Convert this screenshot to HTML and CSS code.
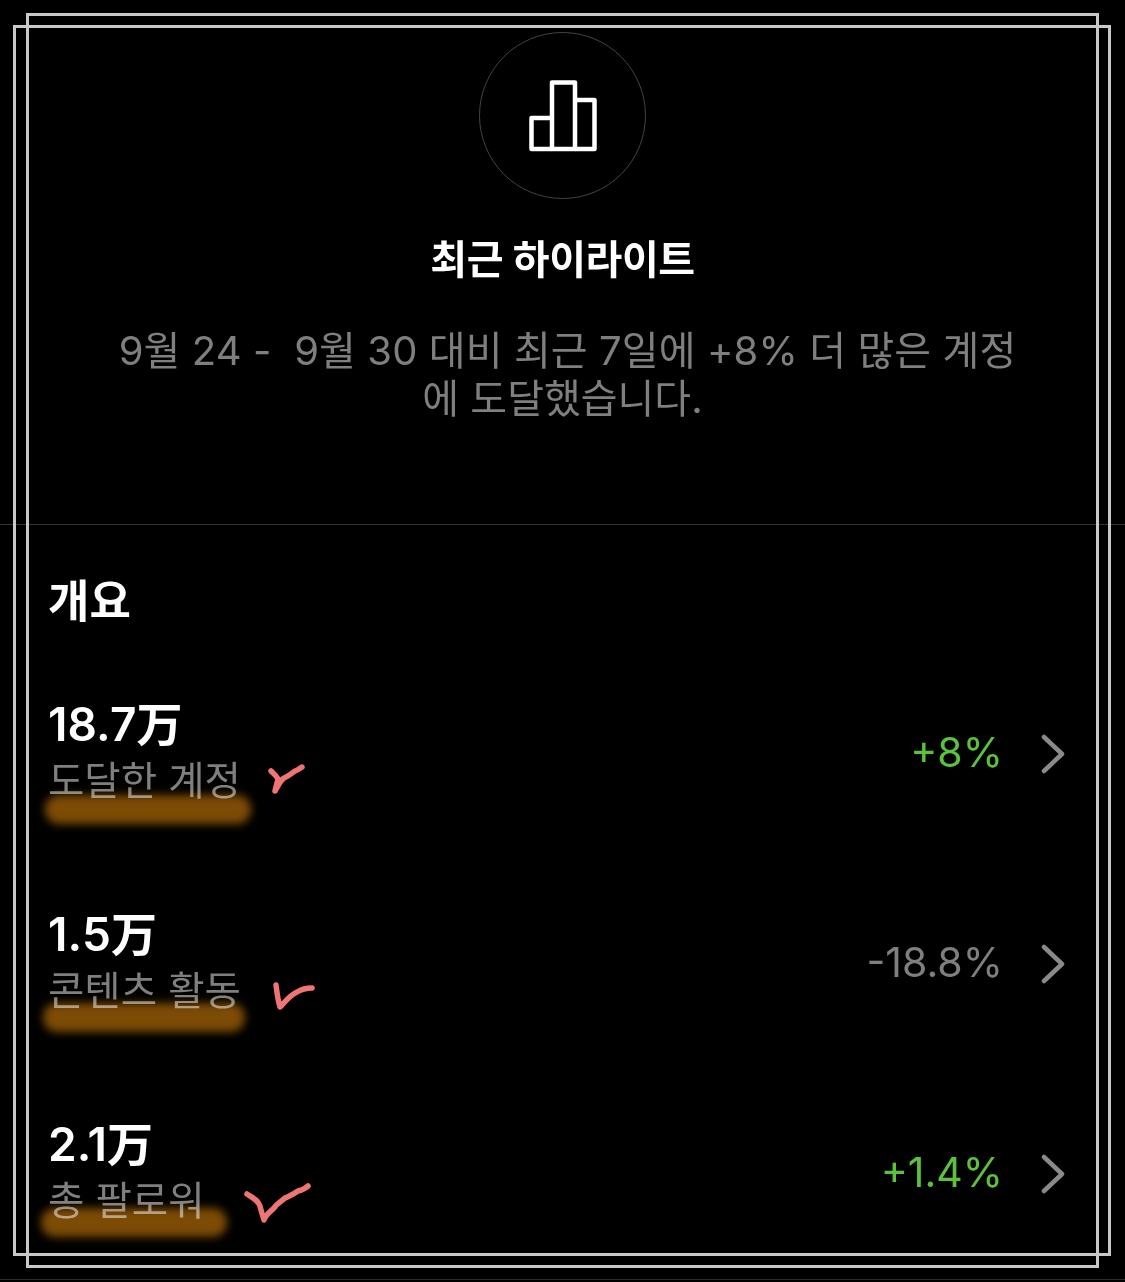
FILE: index.html
```html
<!DOCTYPE html>
<html lang="ko">
<head>
<meta charset="utf-8">
<title>최근 하이라이트</title>
<link rel="stylesheet" href="styles.css">
</head>
<body>
<div class="frame frame-a"></div>
<div class="frame frame-b"></div>
<main class="page">
  <header class="hero">
    <div class="badge">
      <svg class="badge-icon" width="68" height="72" viewBox="0 0 68 72" fill="none" stroke="#fff" stroke-width="4.5" stroke-linejoin="round">
        <path d="M23 69H2.5V38H23"/>
        <path d="M23 69V2.5H46V69H23Z"/>
        <path d="M46 20H65.5V69H46"/>
      </svg>
    </div>
    <h1 class="title">최근 하이라이트</h1>
    <p class="desc"><span class="desc-first">9월 24 -&nbsp; 9월 30 대비 최근 7일에 +8% 더 많은 계정</span><br>에 도달했습니다.</p>
  </header>
  <section class="overview">
    <h2 class="heading">개요</h2>
    <div class="row">
      <div class="metric"><div class="value">18.7万</div><div class="label">도달한 계정</div></div>
      <div class="change up">+8%</div>
      <svg class="chevron" width="24" height="40" viewBox="0 0 24 40" fill="none"><path d="M3 3L21 20L3 37"/></svg>
      <span class="hl hl-1"></span>
      <svg class="mark mark-1" width="40" height="36" viewBox="0 0 40 36" fill="none"><path d="M4 8C6 10 9 12 11 16C10 20 9 24 8 28C11 23 13 18 17 15C22 13 25 10 28 8C31 7 33 5 35 4"/></svg>
    </div>
    <div class="row">
      <div class="metric"><div class="value">1.5万</div><div class="label">콘텐츠 활동</div></div>
      <div class="change flat">-18.8%</div>
      <svg class="chevron" width="24" height="40" viewBox="0 0 24 40" fill="none"><path d="M3 3L21 20L3 37"/></svg>
      <span class="hl hl-2"></span>
      <svg class="mark mark-2" width="44" height="32" viewBox="0 0 44 32" fill="none"><path d="M3 4C4 12 5 20 7 26C12 21 17 14 24 11C29 8 34 7 39 7"/></svg>
    </div>
    <div class="row">
      <div class="metric"><div class="value">2.1万</div><div class="label">총 팔로워</div></div>
      <div class="change up">+1.4%</div>
      <svg class="chevron" width="24" height="40" viewBox="0 0 24 40" fill="none"><path d="M3 3L21 20L3 37"/></svg>
      <span class="hl hl-3"></span>
      <svg class="mark mark-3" width="70" height="46" viewBox="0 0 70 46" fill="none"><path d="M4 13C10 17 15 19 17 25C18 30 20 35 21 39C23 33 27 31 31 27C34 22 38 21 42 17C48 14 51 13 55 10C59 9 62 8 65 5"/></svg>
    </div>
  </section>
</main>
<div class="edge"></div>
</body>
</html>
```

FILE: styles.css
```css
* { box-sizing: border-box; }
html, body { margin: 0; padding: 0; background: #000; }
body {
  position: relative;
  width: 1125px;
  height: 1282px;
  overflow: hidden;
  font-family: "Inter", "Noto Sans CJK KR", "Liberation Sans", sans-serif;
  color: #fff;
}
.frame {
  position: absolute;
  border: 3px solid #c8c8c8;
  pointer-events: none;
}
.frame-a { left: 26px; top: 13px; width: 1073px; height: 1255px; }
.frame-b { left: 13px; top: 25px; width: 1098px; height: 1231px; }
.edge {
  position: absolute;
  left: 0;
  right: 0;
  bottom: 2px;
  height: 1px;
  background: #2c2c2c;
}
.page { display: flex; flex-direction: column; }
.hero {
  height: 525px;
  padding-top: 32px;
  display: flex;
  flex-direction: column;
  align-items: center;
  border-bottom: 1px solid #333;
}
.badge {
  width: 167px;
  height: 167px;
  border: 1.5px solid #444;
  border-radius: 50%;
  display: flex;
  align-items: center;
  justify-content: center;
}
.badge-icon { display: block; }
.title {
  margin: 36px 0 0;
  font-size: 40px;
  line-height: 50px;
  font-weight: 600;
  letter-spacing: -0.4px;
  color: #fff;
}
.desc {
  margin: 42px 0 0;
  font-size: 40px;
  line-height: 48px;
  font-weight: 400;
  text-align: center;
  color: #7f7f7f;
}
.desc-first { margin-left: 10px; letter-spacing: 0.1px; }
.overview { padding: 0 60px 0 48px; }
.heading {
  margin: 52px 0 22px;
  height: 50px;
  font-size: 45px;
  line-height: 50px;
  font-weight: 600;
}
.row {
  position: relative;
  height: 210px;
  display: flex;
  align-items: center;
}
.metric { flex: 1; padding-bottom: 6px; }
.value {
  font-size: 46px;
  line-height: 56px;
  font-weight: 600;
  letter-spacing: 0.1px;
}
.label {
  margin-top: 4px;
  font-size: 39.5px;
  line-height: 50px;
  font-weight: 400;
  color: #7f7f7f;
}
.change {
  padding-bottom: 4px;
  font-size: 41px;
  line-height: 50px;
  font-weight: 400;
}
.up { color: #5cc13c; }
.flat { color: #7f7f7f; }
.chevron {
  display: block;
  margin-left: 38px;
  stroke: #8a8a8a;
  stroke-width: 4.5;
  stroke-linecap: round;
  stroke-linejoin: round;
}
.hl {
  position: absolute;
  height: 29px;
  border-radius: 14px;
  background: #7c4b05;
  filter: blur(4px);
  mix-blend-mode: screen;
}
.hl-1 { left: -3px; top: 146px; width: 206px; }
.hl-2 { left: -5px; top: 144px; width: 202px; }
.hl-3 { left: -7px; top: 139px; width: 186px; }
.mark {
  position: absolute;
  stroke: #ef7474;
  stroke-width: 5.5;
  stroke-linecap: round;
  stroke-linejoin: round;
}
.mark-1 { left: 219px; top: 114px; }
.mark-2 { left: 225px; top: 122px; }
.mark-3 { left: 195px; top: 112px; }
```
